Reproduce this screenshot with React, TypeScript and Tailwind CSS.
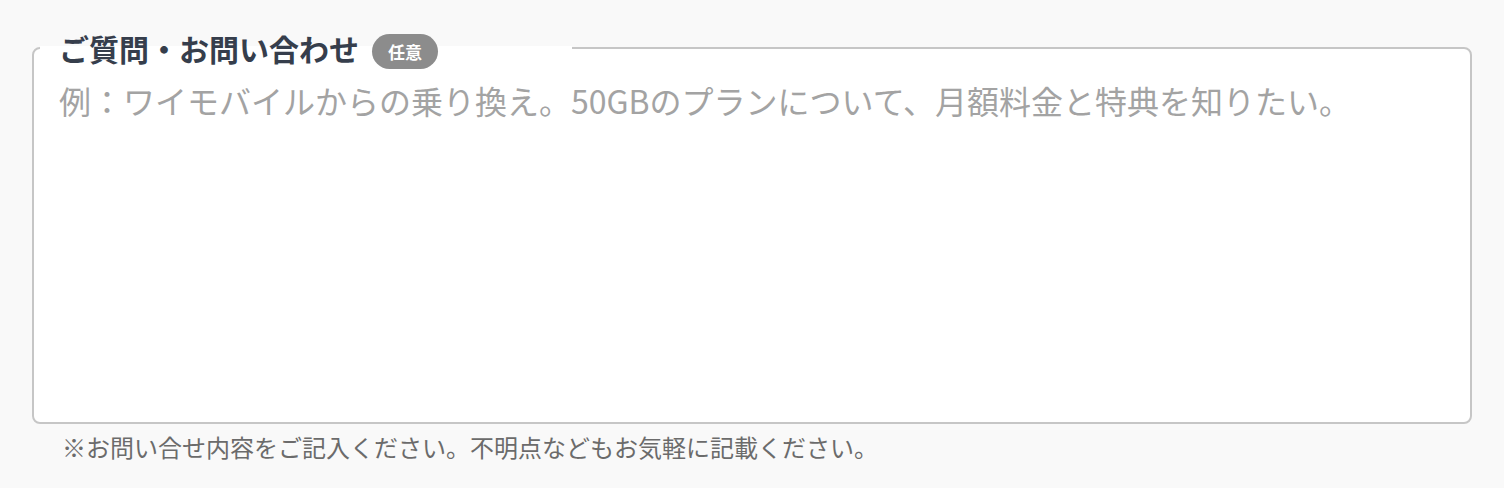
import { useState } from 'react';

function App() {
  const [text, setText] = useState('');

  return (
    <div className="h-[488px] w-full bg-[#f9f9f9] px-8 pt-[47px] font-['Noto_Sans_CJK_JP','Noto_Sans',sans-serif]">
      {/* 入力欄 */}
      <div className="relative h-[377px] rounded-lg border-2 border-[#c6c6c6] bg-white">
        <div className="absolute left-[6px] top-[-3px] h-[6px] w-[532px] bg-white" />
        <div className="absolute left-[25px] top-[-16px] flex items-start gap-[13px]">
          <span className="text-[30px] font-bold leading-[30px] text-[#363e4c]">ご質問・お問い合わせ</span>
          <span className="mt-[1px] flex h-[35px] items-center rounded-full bg-[#8c8c8c] px-[16px] text-[17px] font-bold text-white">
            任意
          </span>
        </div>
        <textarea
          value={text}
          onChange={(e) => setText(e.target.value)}
          placeholder="例：ワイモバイルからの乗り換え。50GBのプランについて、月額料金と特典を知りたい。"
          className="h-full w-full resize-none bg-transparent pl-[25px] pr-6 pt-[29px] text-[32px] leading-[1.4] text-[#333] outline-none placeholder:text-[#a3a3a3]"
        />
      </div>

      {/* 注意書き */}
      <p className="mt-[5px] pl-[30px] text-[24px] leading-[36px] text-[#6b6b6b]">
        ※お問い合せ内容をご記入ください。不明点などもお気軽に記載ください。
      </p>
    </div>
  );
}

export default App;
